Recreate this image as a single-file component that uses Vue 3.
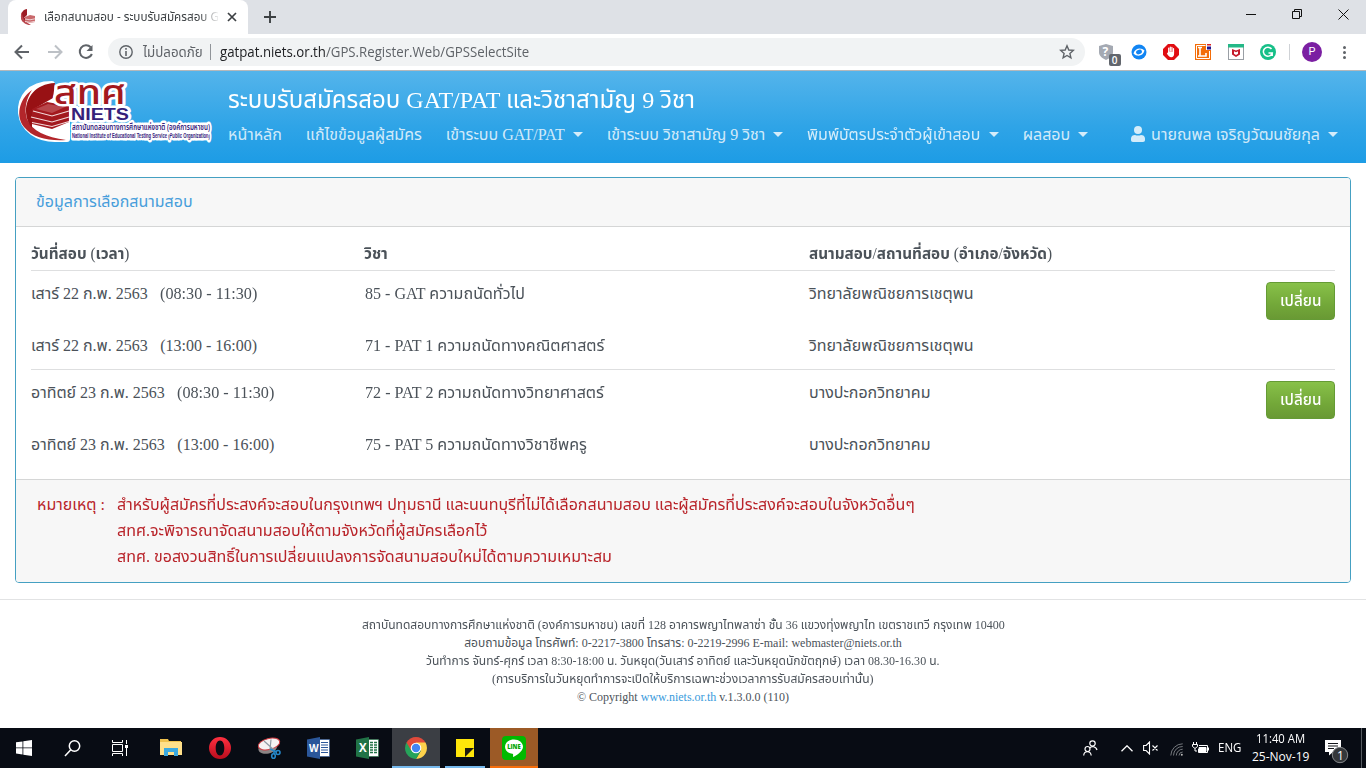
<script setup>
// Sets a text run to an exact advance width while keeping its font size.
const vFit = {
  mounted(el, { value }) {
    const w = el.offsetWidth
    if (!w) return
    el.style.transform = `scaleX(${value / w})`
    el.style.marginRight = `${value - w}px`
  }
}
const nav = [
  { t: 'หน้าหลัก', w: 54 },
  { t: 'แก้ไขข้อมูลผู้สมัคร', w: 116 },
  { t: 'เข้าระบบ GAT/PAT', w: 119, c: true },
  { t: 'เข้าระบบ วิชาสามัญ 9 วิชา', w: 159, c: true },
  { t: 'พิมพ์บัตรประจำตัวผู้เข้าสอบ', w: 173.5, c: true },
  { t: 'ผลสอบ', w: 48, c: true }
]
const groups = [
  [
    { d: 'เสาร์ 22 ก.พ. 2563', dw: 117, h: '(08:30 - 11:30)', s: '85 - GAT ความถนัดทั่วไป', sw: 159.5, p: 'วิทยาลัยพณิชยการเชตุพน', pw: 165 },
    { d: 'เสาร์ 22 ก.พ. 2563', dw: 117, h: '(13:00 - 16:00)', s: '71 - PAT 1 ความถนัดทางคณิตศาสตร์', sw: 239, p: 'วิทยาลัยพณิชยการเชตุพน', pw: 165 }
  ],
  [
    { d: 'อาทิตย์ 23 ก.พ. 2563', dw: 134, h: '(08:30 - 11:30)', s: '72 - PAT 2 ความถนัดทางวิทยาศาสตร์', sw: 238.5, p: 'บางปะกอกวิทยาคม', pw: 122 },
    { d: 'อาทิตย์ 23 ก.พ. 2563', dw: 134, h: '(13:00 - 16:00)', s: '75 - PAT 5 ความถนัดทางวิชาชีพครู', sw: 222, p: 'บางปะกอกวิทยาคม', pw: 122 }
  ]
]
const notes = [
  { t: 'สำหรับผู้สมัครที่ประสงค์จะสอบในกรุงเทพฯ ปทุมธานี และนนทบุรีที่ไม่ได้เลือกสนามสอบ และผู้สมัครที่ประสงค์จะสอบในจังหวัดอื่นๆ', w: 798 },
  { t: 'สทศ.จะพิจารณาจัดสนามสอบให้ตามจังหวัดที่ผู้สมัครเลือกไว้', w: 370.5 },
  { t: 'สทศ. ขอสงวนสิทธิ์ในการเปลี่ยนแปลงการจัดสนามสอบใหม่ได้ตามความเหมาะสม', w: 494.5 }
]
const foot = [
  { t: 'สถาบันทดสอบทางการศึกษาแห่งชาติ (องค์การมหาชน) เลขที่ 128 อาคารพญาไทพลาซ่า ชั้น 36 แขวงทุ่งพญาไท เขตราชเทวี กรุงเทพ 10400', w: 643 },
  { t: 'สอบถามข้อมูล โทรศัพท์: 0-2217-3800 โทรสาร: 0-2219-2996 E-mail: webmaster@niets.or.th', w: 438 },
  { t: 'วันทำการ จันทร์-ศุกร์ เวลา 8:30-18:00 น. วันหยุด(วันเสาร์ อาทิตย์ และวันหยุดนักขัตฤกษ์) เวลา 08.30-16.30 น.', w: 514 },
  { t: '(การบริการในวันหยุดทำการจะเปิดให้บริการเฉพาะช่วงเวลาการรับสมัครสอบเท่านั้น)', w: 382 }
]
</script>

<template>
  <div class="screen">
    <div class="tabs">
      <div class="tab">
        <svg class="fav" width="16" height="16" viewBox="0 0 16 16"><path d="M7 0C1 1 0 7 2 12l5 3V9H4l3-3z" fill="#9c1c24"/><path d="M2 3C-1 8 2 16 11 16 5 13 2 9 2 3z" fill="#b9474d"/><path d="M5 8l5-2 5 1v6l-5 1-5-1z" fill="#c9686b"/><path d="M5 10l5 .8 5-1M5 12.500l5 .8 5-1" stroke="#fff" stroke-width=".7" fill="none"/></svg>
        <div class="tabtext"><span class="fit" v-fit="182">เลือกสนามสอบ - ระบบรับสมัครสอบ GA</span></div>
        <svg class="tabx" width="10" height="10" viewBox="0 0 10 10"><path d="M1 1l8 8M9 1L1 9" stroke="#3c4043" stroke-width="1.700"/></svg>
      </div>
      <svg class="plus" width="12" height="12" viewBox="0 0 12 12"><path d="M6 0v12M0 6h12" stroke="#3c4043" stroke-width="1.900"/></svg>
      <svg class="winbtns" width="106" height="14" viewBox="0 0 106 14" fill="none" stroke="#111"><path d="M0 7.500h10" /><path d="M46.500 4.500h7v7h-7zM48.500 4V2.500h7v7H54"/><path d="M92.500 2.500l10 10m0-10l-10 10"/></svg>
    </div>
    <div class="toolbar">
      <svg width="16" height="16" viewBox="0 0 16 16" fill="none" stroke="#5f6368" stroke-width="2"><path d="M15 8H2M8 1.500L1.500 8 8 14.500"/></svg>
      <svg class="fwd" width="16" height="16" viewBox="0 0 16 16" fill="none" stroke="#bdc1c6" stroke-width="2"><path d="M1 8h13M8 1.500L14.500 8 8 14.500"/></svg>
      <svg class="rel" width="16" height="16" viewBox="0 0 16 16"><path d="M12.700 3.300A6.300 6.300 0 1 0 13.900 10" fill="none" stroke="#5f6368" stroke-width="2"/><path d="M14.500 1v6H8.500z" fill="#5f6368"/></svg>
      <div class="omni">
        <svg width="14" height="14" viewBox="0 0 14 14"><circle cx="7" cy="7" r="6.200" fill="none" stroke="#5f6368" stroke-width="1.400"/><path d="M6.200 6h1.600v5H6.200zM6.200 3h1.600v1.700H6.200z" fill="#5f6368"/></svg>
        <span class="unsafe fit" v-fit="60">ไม่ปลอดภัย</span>
        <i class="bar"></i>
        <span class="url fit" v-fit="309"><b>gatpat.niets.or.th</b>/GPS.Register.Web/GPSSelectSite</span>
        <svg class="star" width="16" height="16" viewBox="0 0 16 16"><path d="M8 1.800l1.800 4.200 4.500.4-3.400 3 1 4.400L8 11.500l-3.900 2.300 1-4.400-3.400-3 4.500-.4z" fill="none" stroke="#5f6368" stroke-width="1.400"/></svg>
      </div>
      <div class="exts">
        <svg width="24" height="24" viewBox="0 0 24 24"><path d="M2 4l7-2 7 2v6c0 4-3 6-7 8-4-2-7-4-7-8z" fill="#a4a9b2"/><text x="5.500" y="14" font-family="Open Sans, sans-serif" font-size="12" font-weight="700" fill="#fff">?</text><rect x="12" y="12" width="12" height="12" rx="2" fill="#62666d"/><text x="14.800" y="21.800" font-family="Open Sans, sans-serif" font-size="10" font-weight="600" fill="#fff">0</text></svg>
        <svg width="16" height="16" viewBox="0 0 16 16"><circle cx="8" cy="8" r="7.500" fill="#1185f3"/><path d="M2.500 9.500C4 4 10 3 13.500 6.500 12 12.500 6 13 2.500 9.500z" fill="#fff"/><ellipse cx="8" cy="8" rx="3" ry="2.200" transform="rotate(-20 8 8)" fill="#1185f3"/></svg>
        <svg width="16" height="16" viewBox="0 0 16 16"><path d="M5 0h6l5 5v6l-5 5H5l-5-5V5z" fill="#e10d12"/><path d="M5.700 8V4M7.300 7V3M8.900 7V3.300M10.500 8V4.500" stroke="#fff" stroke-width="1.200" stroke-linecap="round"/><path d="M5.100 7.500h6v2.200c0 2-1 3.500-2.800 3.500-2 0-2.600-1-4.500-3.700l.8-.5z" fill="#fff"/></svg>
        <svg width="17" height="16" viewBox="0 0 17 16"><rect width="16" height="16" fill="#f36d09"/><path d="M1.500 1.500h9M1.500 1.500v13h13V7" fill="none" stroke="#fff"/><path d="M3 3.500h4M5 3.500v8M3 12h8V9" fill="none" stroke="#fff" stroke-width="1.600"/><path d="M11 0h6v6h-6z" fill="#fff"/><path d="M12 0h4v1.500h-4z" fill="#d22"/><path d="M12 2.500h4v3h-4z" fill="#23148c"/></svg>
        <svg width="16" height="16" viewBox="0 0 16 16"><rect x=".5" y=".5" width="15" height="15" fill="#fff" stroke="#9a9fa5"/><path d="M0 0h16v3.500H0z" fill="#24b887"/><path d="M4 5l4 1.500L12 5v5.500L8 13l-4-2.500z" fill="#c51b2b"/><path d="M6 7.200l2 1 2-1v2.500L8 11l-2-1.300z" fill="#fff"/></svg>
        <svg width="16" height="16" viewBox="0 0 16 16"><circle cx="8" cy="8" r="8" fill="#17bf88"/><path d="M11.500 5A4.500 4.500 0 1 0 12.200 9H8.500m3.700 0v3" fill="none" stroke="#fff" stroke-width="1.500"/></svg>
      </div>
      <i class="sep"></i>
      <div class="avatar">P</div>
      <div class="dots"><i></i><i></i><i></i></div>
    </div>

    <header class="hero">
      <svg class="logo" width="202" height="76" viewBox="0 0 202 76">
        <path d="M37 8C14 8 5 22 6 37c2 17 17 26 34 26h12V28L40 20z" fill="#fff" stroke="#fff" stroke-width="6" stroke-linejoin="round"/>
        <path d="M17 14C3 24 1 41 9 51c9 11 24 14 42 13C31 61 17 55 12 43 9 33 11 23 17 14z" fill="#b3262b"/>
        <path d="M40 7C20 8 11 22 11 35c0 8 3 13 6 17V34l21-12z" fill="#981114"/>
        <path d="M17 33l15-7 22 4v16l-17 7-20-5z" fill="#a3191e"/>
        <path d="M18 35l19 5 17-5M16 41l21 5 17-5M17 46.500l20 4 17-5" fill="none" stroke="#f3dada" stroke-width="1.200"/>
        <path d="M21 33l12-5 17 3-13 6z" fill="#b8474b"/>
        <g class="outlined">
          <text x="57" y="61.500" textLength="138" lengthAdjust="spacingAndGlyphs" class="logos2">National Institute of Educational Testing Service (Public Organization)</text>
          <text x="57" y="54" textLength="138" lengthAdjust="spacingAndGlyphs" class="logos1">สถาบันทดสอบทางการศึกษาแห่งชาติ (องค์การมหาชน)</text>
          <text x="39" y="28" textLength="72" lengthAdjust="spacingAndGlyphs" class="logoth">สทศ</text>
          <text x="56" y="43.500" textLength="58" lengthAdjust="spacingAndGlyphs" class="logoen">NIETS</text>
        </g>
      </svg>
      <div class="heromain">
        <h1><span class="fit" v-fit="467">ระบบรับสมัครสอบ GAT/PAT และวิชาสามัญ 9 วิชา</span></h1>
        <nav>
          <a v-for="n in nav" :key="n.t"><span class="fit" v-fit="n.w">{{ n.t }}</span><i v-if="n.c" class="caret"></i></a>
          <a class="user">
            <svg width="14" height="16" viewBox="0 0 14 16"><circle cx="7" cy="4" r="4" fill="currentColor"/><path d="M0 14v-1.500C0 10 2 9 4 9c2 .8 4 .8 6 0 2 0 4 1 4 3.500V14c0 1.300-.7 2-2 2H2c-1.300 0-2-.7-2-2z" fill="currentColor"/></svg>
            <span class="fit" v-fit="169">นายณพล เจริญวัฒนชัยกุล</span><i class="caret"></i>
          </a>
        </nav>
      </div>
    </header>

    <main class="card">
      <div class="cardhead"><span class="fit" v-fit="157">ข้อมูลการเลือกสนามสอบ</span></div>
      <div class="cardbody">
        <div class="row th">
          <div><span class="fit" v-fit="98.5">วันที่สอบ <em>(</em>เวลา<em>)</em></span></div>
          <div><span class="fit" v-fit="24">วิชา</span></div>
          <div><span class="fit" v-fit="243.5">สนามสอบ<em>/</em>สถานที่สอบ <em>(</em>อำเภอ<em>/</em>จังหวัด<em>)</em></span></div>
        </div>
        <div v-for="(g, gi) in groups" :key="gi" class="group">
          <div v-for="(r, ri) in g" :key="ri" class="row">
            <div class="cell"><span class="fit" v-fit="r.dw">{{ r.d }}</span><span class="hours fit" v-fit="97">{{ r.h }}</span></div>
            <div class="cell subject"><span class="fit" v-fit="r.sw">{{ r.s }}</span></div>
            <div class="cell"><span class="fit" v-fit="r.pw">{{ r.p }}</span></div>
            <button v-if="ri === 0"><span class="fit" v-fit="41">เปลี่ยน</span></button>
          </div>
        </div>
      </div>
      <div class="cardfoot">
        <div class="label"><span class="fit" v-fit="68">หมายเหตุ :</span></div>
        <div><p v-for="n in notes" :key="n.t"><span class="fit" v-fit="n.w">{{ n.t }}</span></p></div>
      </div>
    </main>

    <footer>
      <p v-for="f in foot" :key="f.t"><span class="fit" v-fit="f.w">{{ f.t }}</span></p>
      <p><span class="fit" v-fit="212">© Copyright <a>www.niets.or.th</a> v.1.3.0.0 (110)</span></p>
    </footer>

    <div class="taskbar">
      <div class="slot"><svg width="16" height="16" viewBox="0 0 16 16" fill="#fff"><path d="M0 2.300L6.500 1.400V7.500H0zM7.300 1.300L16 0v7.500H7.300zM0 8.300h6.500v6.200L0 13.600zM7.300 8.300H16V16l-8.700-1.300z"/></svg></div>
      <div class="slot"><svg width="17" height="17" viewBox="0 0 17 17" fill="none" stroke="#fff" stroke-width="1.500"><circle cx="10.500" cy="6" r="5.200"/><path d="M6.800 9.800L1 16"/></svg></div>
      <div class="slot"><svg width="17" height="16" viewBox="0 0 17 16" fill="none" stroke="#fff"><path d="M.5 0v2.500h10V0M.5 16v-2.500h10V16M.5 4.500h10v7H.5zM14.500 0v4M14.500 8v8"/><path d="M13 5h3v3h-3z" fill="#fff" stroke="none"/></svg></div>
      <div class="slot w"><svg width="22" height="20" viewBox="0 0 22 20"><path d="M0 1h8l1 2h12v14H0z" fill="#f0c24e"/><path d="M0 4h22v13H0z" fill="#ffe08a"/><path d="M4 10h14v8h-4v-4H8v4H4z" fill="#3ba9e0"/></svg></div>
      <div class="slot opera"><svg width="22" height="22" viewBox="0 0 22 22"><defs><linearGradient id="op" x2="0" y2="1"><stop stop-color="#ff3040"/><stop offset="1" stop-color="#b90d1d"/></linearGradient></defs><path fill="url(#op)" fill-rule="evenodd" d="M11 0a11 11 0 1 0 0 22 11 11 0 0 0 0-22zm0 3.500c2.700 0 4.300 3.300 4.300 7.500s-1.600 7.500-4.300 7.500S6.700 15.200 6.700 11 8.300 3.500 11 3.500z"/></svg></div>
      <div class="slot"><svg width="25" height="23" viewBox="0 0 25 23"><ellipse cx="10.500" cy="11" rx="9.500" ry="5.500" transform="rotate(-12 11 10)" fill="#8c8585"/><ellipse cx="12" cy="7" rx="11" ry="5.500" transform="rotate(-14 12 7)" fill="#f5f2f2" stroke="#cf3b40"/><path d="M7 4l10 9M14 2.500l-1 10" stroke="#8f9aa3" stroke-width="1.200"/><g fill="none" stroke="#2587c8" stroke-width="1.600"><path d="M13 12l7 3M17 13v4"/><circle cx="21" cy="15.500" r="2"/><ellipse cx="16.500" cy="19" rx="1.800" ry="2.300"/></g></svg></div>
      <div class="slot"><svg width="23" height="22" viewBox="0 0 23 22"><path d="M11 2.500h11.500v17H11z" fill="#fff" stroke="#2b579a" stroke-width=".6"/><path d="M14 5.500h7M14 8h7M14 10.500h7M14 13h7M14 15.500h7" stroke="#2b579a"/><path d="M0 2.500L13 0v22L0 19.500z" fill="#2b579a"/><text x="2" y="15" font-family="Open Sans, sans-serif" font-weight="700" font-size="10" fill="#fff">W</text></svg></div>
      <div class="slot"><svg width="23" height="22" viewBox="0 0 23 22"><path d="M11 2.500h11.500v17H11z" fill="#fff" stroke="#217346" stroke-width=".6"/><path d="M14 5.500h3m1 0h3M14 8h3m1 0h3M14 10.500h3m1 0h3M14 13h3m1 0h3M14 15.500h3m1 0h3" stroke="#217346" stroke-width="1.500"/><path d="M0 2.500L13 0v22L0 19.500z" fill="#217346"/><text x="3" y="15.300" font-family="Open Sans, sans-serif" font-weight="700" font-size="11.500" fill="#fff">X</text></svg></div>
      <div class="slot chrome"><svg width="22" height="22" viewBox="0 0 22 22"><path d="M11 11L1.500 5.500A11 11 0 0 1 20.500 5.500z" fill="#e04a3b"/><path d="M11 11V22A11 11 0 0 1 1.500 5.500z" fill="#26a35a"/><path d="M11 5.500h9.500A11 11 0 0 1 11 22l4.800-8.200z" fill="#fdd24b"/><path d="M6.300 13.800L1.500 5.500 11 5.500z" fill="#e04a3b"/><path d="M11 22l4.800-8.200H6.300z" fill="#26a35a"/><circle cx="11" cy="11" r="5.300" fill="#fff"/><circle cx="11" cy="11" r="4.200" fill="#4285f4"/></svg></div>
      <div class="slot sticky"><svg width="18" height="18" viewBox="0 0 18 18"><path d="M0 0h18v18H0z" fill="#ffe60a"/><path d="M9 9h9L9 18z" fill="#1c1a10"/></svg></div>
      <div class="slot line"><svg width="24" height="24" viewBox="0 0 24 24"><rect width="24" height="24" rx="4" fill="#00b900"/><path d="M12 3.500c-5 0-9 3.200-9 7.200 0 3.600 3 6.500 7.400 7.100 1 .2.800.8.600 2.700 0 .4.300.5.700.3 1.900-.9 9.300-5.300 9.300-10.100 0-4-4-7.200-9-7.200z" fill="#fff"/><text x="5.200" y="13" textLength="13.500" lengthAdjust="spacingAndGlyphs" font-family="Open Sans, sans-serif" font-weight="800" font-size="6.500" fill="#00a500">LINE</text></svg></div>
      <div class="tray">
        <svg class="people" width="15" height="16" viewBox="0 0 15 16" fill="none" stroke="#fff" stroke-width="1.200"><circle cx="9.500" cy="3.500" r="2.700"/><path d="M6.500 8c2-2 6.500-2 7.500 2"/><circle cx="4.500" cy="9" r="2.500"/><path d="M.7 15.500c.3-5 7-5 7.500 0"/></svg>
        <svg class="chev" width="12" height="7" viewBox="0 0 12 7" fill="none" stroke="#fff" stroke-width="1.300"><path d="M.5 6.200L6 .8l5.500 5.400"/></svg>
        <svg class="vol" width="15" height="14" viewBox="0 0 15 14" fill="none" stroke="#fff" stroke-width="1.100"><path d="M.6 4.500h2.500L6.500 1v12L3.100 9.500H.6zM9.500 4.500l5 5m0-5l-5 5"/></svg>
        <svg class="wifi" width="13" height="13" viewBox="0 0 13 13" fill="none" stroke="#74787d" stroke-width="1"><path d="M.8 12.500A12 12 0 0 1 12.700.8M3.500 12.500A9 9 0 0 1 12.700 3.500M6.300 12.500a6.500 6.500 0 0 1 6.400-6.300M9 12.500A3.700 3.700 0 0 1 12.700 9"/><circle cx="11.800" cy="11.800" r="1" fill="#bbb" stroke="none"/></svg>
        <svg class="bat" width="17" height="13" viewBox="0 0 17 13" fill="none" stroke="#fff"><path d="M1.500 0v3M4.500 0v3M.5 2.500h5v2L3 6.500l-2.500-2zM3 6.500V9h2M7 3.500h8.500v7h-9V7"/><path d="M7 5.500h7v4H7z" fill="#fff"/><path d="M16.500 5.500v3"/></svg>
        <span class="eng fit" v-fit="23">ENG</span>
        <div class="clock"><span class="fit" v-fit="49">11:40 AM</span><span class="fit" v-fit="57">25-Nov-19</span></div>
        <svg class="notif" width="26" height="26" viewBox="0 0 26 26"><path d="M0 1h16v12H8l-4 3.500V13H0z" fill="#fff"/><path d="M3 4.500h10M3 7h10M3 9.500h6" stroke="#14161b"/><circle cx="15" cy="16" r="7.700" fill="#34373a" stroke="#85888b"/><text x="12" y="20.500" font-family="Open Sans, sans-serif" font-size="12" fill="#fff">1</text></svg>
        <i class="peek"></i>
      </div>
    </div>
  </div>
</template>

<style>
html, body { margin: 0; overflow: hidden; background: #fff; }
</style>

<style scoped>
* { box-sizing: border-box; }
.screen { width: 1366px; height: 768px; display: flex; flex-direction: column; overflow: hidden; background: #fff; color: #4b5259; font: 16px "Liberation Serif", "Noto Sans Thai", "Noto Sans", sans-serif; white-space: nowrap; }
svg { display: block; flex: none; }
p, h1 { margin: 0; font-weight: 400; }
em { font-style: normal; font-weight: 400; }
.fit { display: inline-block; transform-origin: 0 50%; flex: none; }
.tabs { height: 34px; background: #dee1e6; display: flex; flex: none; }
.tab { width: 240px; margin-left: 8px; background: #fff; border-radius: 8px 8px 0 0; display: flex; align-items: center; padding-left: 12px; }
.tabtext { width: 174px; margin-left: 8px; overflow: hidden; font: 12px/22px "Open Sans", "Noto Sans Thai", sans-serif; color: #3c4043; mask-image: linear-gradient(90deg, #000 155px, transparent 176px); }
.tabx { margin-left: 9px; }
.plus { margin: 11px 0 0 16px; }
.winbtns { margin: 7px 14px 0 auto; }
.toolbar { height: 37px; border-bottom: 1px solid #b5b8bb; display: flex; align-items: center; padding-left: 14px; flex: none; }
.fwd { margin-left: 17px; }
.rel { margin-left: 15px; }
.omni { height: 28px; width: 977px; margin-left: 14px; border-radius: 14px; background: #f1f3f4; display: flex; align-items: center; padding: 0 10px 0 11px; font: 14px/20px "Open Sans", "Noto Sans Thai", sans-serif; color: #5f6368; }
.unsafe { margin-left: 10px; }
.bar { width: 1px; height: 16px; background: #909499; margin-left: 7px; }
.url { margin-left: 9px; }
.url b { font-weight: 400; color: #202124; }
.star { margin-left: auto; }
.exts { display: flex; align-items: center; margin-left: 12px; width: 179px; gap: 16px; }
.exts svg:first-child { margin: 4px -6px 0 0; }
.sep { width: 1px; height: 16px; background: #cfd2d6; margin-left: 13px; }
.avatar { width: 20px; height: 20px; border-radius: 50%; background: #7b1fa2; color: #fff; font: 11px/20px Roboto, sans-serif; text-align: center; margin-left: 12px; }
.dots { display: grid; gap: 2px; margin-left: 21px; }
.dots i { width: 3px; height: 3px; border-radius: 50%; background: #5f6368; }
.hero { height: 92px; flex: none; display: flex; background: linear-gradient(#54b4eb, #2fa4e7 60%, #1d9ce5); padding-left: 15px; }
.logo { margin-top: 5px; }
.outlined text { stroke: #fff; stroke-width: 5px; stroke-linejoin: round; paint-order: stroke; }
.logoth { font: 500 33px "Noto Sans Thai", "Liberation Sans", sans-serif; fill: #a3191e; }
.logoen { font: 700 16px "Liberation Sans", sans-serif; fill: #35217a; }
.logos1 { font: 600 9px "Noto Sans Thai", "Liberation Sans", sans-serif; fill: #35217a; }
.logos2 { font: 700 6.500px "Liberation Sans", sans-serif; fill: #35217a; }
.heromain { margin-left: 11px; flex: 1; }
h1 { font-size: 24px; line-height: 36px; margin-top: 11px; color: #fff; }
nav { display: flex; color: rgba(255,255,255,.8); line-height: 24px; margin-top: 5px; }
nav a { display: flex; align-items: center; margin-right: 24px; }
.caret { border: 5px solid transparent; border-top-color: currentColor; border-bottom: 0; margin: -2px 0 0 8px; }
.user { margin: 0 28px 0 auto; }
.user svg { margin-top: -2px; }
.user .fit { margin-left: 6px; }
.card { margin: 14px 15px 0; height: 406px; flex: none; border: 1px solid #45a0c2; border-radius: 4px; overflow: hidden; }
.cardhead { height: 49px; background: #f7f7f7; border-bottom: 1px solid #d5d6d6; color: #479edb; padding: 11px 20px; line-height: 26px; }
.cardbody { padding: 0 15px; height: 252px; }
.row { display: grid; grid-template-columns: 333px 445px 457px 69px; line-height: 26px; height: 52px; }
.th { height: 43px; padding-top: 14px; font-weight: 700; }
.group { border-top: 1px solid #dedfe0; padding-top: 11px; height: 99px; }
.cell { margin-top: -1px; }
.subject { padding-left: .5px; }
.hours { margin-left: 12.500px; }
button { width: 69px; height: 38px; border: 1px solid #659b35; border-radius: 4px; background: linear-gradient(#88c149, #73a839 60%, #699934); color: #fff; font: 500 16px/24px "Noto Sans Thai", sans-serif; padding: 5px 12.500px; text-align: left; }
.cardfoot { height: 103px; border-top: 1px solid #d5d6d6; background: #f7f7f7; padding: 12px 21px; display: flex; color: #b9242a; line-height: 26px; }
.label { width: 80px; }
footer { margin-top: 16px; border-top: 1px solid #e2e3e4; padding-top: 16px; text-align: center; font-size: 12px; line-height: 18px; height: 129px; flex: none; }
footer p { display: flex; justify-content: center; height: 18px; }
footer a { color: #3a9bdc; }
.taskbar { height: 40px; background: #080c14; display: flex; flex: none; color: #fff; }
.slot { width: 49px; height: 40px; display: flex; align-items: center; justify-content: center; }
.slot:nth-child(-n+3) { width: 48px; }
.w { width: 52px; padding-left: 2px; }
.opera { padding-right: 2px; }
.chrome { width: 48px; background: #3b3e44; border-bottom: 2px solid #76b9ed; padding-top: 2px; }
.sticky { width: 40px; margin: 0 5px; border-bottom: 2px solid #76b9ed; padding-top: 2px; }
.line { width: 48px; background: #9c5a26; border-bottom: 2px solid #f66d0b; padding-top: 2px; }
.tray { margin-left: auto; display: flex; align-items: center; font: 12px/18px "Open Sans", sans-serif; }
.people { margin-right: 1px; }
.chev { margin-left: 22px; }
.vol { margin-left: 10px; }
.wifi { margin-left: 12px; margin-top: 3px; }
.bat { margin-left: 9px; }
.eng { margin-left: 9px; }
.clock { display: grid; justify-items: center; width: 57px; margin-left: 11px; }
.notif { margin-left: 16px; margin-top: 7px; }
.peek { width: 1px; height: 40px; background: #555a60; margin: 0 4px 0 10px; }
</style>
